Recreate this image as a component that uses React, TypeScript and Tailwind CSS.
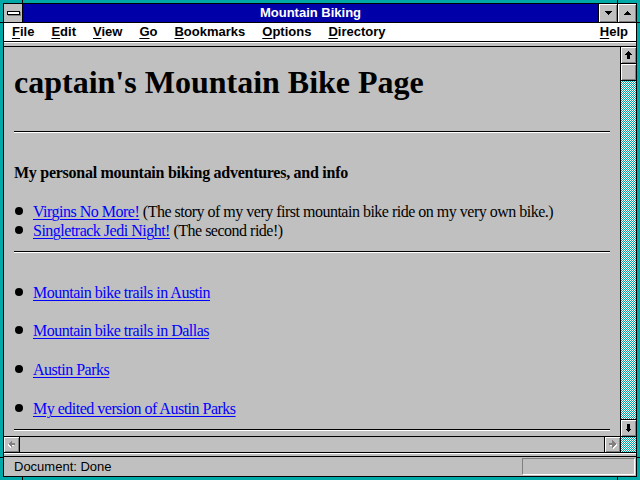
import React from "react";

const bevel = "shadow-[inset_1px_1px_0_#ffffff,inset_-1px_-1px_0_#808080]";
const checker =
  "bg-[repeating-conic-gradient(#00a8a8_0%_25%,#ffffff_0%_50%)] bg-[length:2px_2px]";

function ArrowV({ down = false, color = "#000" }: { down?: boolean; color?: string }) {
  return (
    <svg width="7" height="8" viewBox="0 0 7 8" shapeRendering="crispEdges" style={{ transform: down ? "rotate(180deg)" : undefined }}>
      <polygon points="3.5,0 7,3.5 5,3.5 5,8 2,8 2,3.5 0,3.5" fill={color} />
    </svg>
  );
}

function ArrowH({ left = false }: { left?: boolean }) {
  return (
    <svg width="9" height="9" viewBox="0 0 9 9" shapeRendering="crispEdges" style={{ transform: left ? "scaleX(-1)" : undefined }}>
      <polygon points="1,3 4,3 4,0 8,4 4,8 4,5 1,5" fill="#ffffff" transform="translate(1,1)" />
      <polygon points="1,3 4,3 4,0 8,4 4,8 4,5 1,5" fill="#808080" />
    </svg>
  );
}

function Tri({ down = false }: { down?: boolean }) {
  return (
    <svg width="7" height="4" viewBox="0 0 7 4" shapeRendering="crispEdges">
      {down ? <polygon points="0,0 7,0 3.5,4" fill="#000" /> : <polygon points="3.5,0 7,4 0,4" fill="#000" />}
    </svg>
  );
}

function Hr() {
  return <div className="h-0 border-t border-b border-t-black border-b-white" />;
}

function Bullet({ children }: { children: React.ReactNode }) {
  return (
    <div className="flex h-[19px] leading-[19px] text-[16px] tracking-[-0.5px] whitespace-nowrap">
      <div className="w-[19px] shrink-0 pl-px pt-[5px]">
        <div className="w-2 h-2 rounded-full bg-black" />
      </div>
      <div>{children}</div>
    </div>
  );
}

function A({ children }: { children: React.ReactNode }) {
  return <span className="text-[#0000ff] underline underline-offset-2 decoration-1">{children}</span>;
}

function Menu({ k, rest }: { k: string; rest: string }) {
  return (
    <span>
      <span className="underline underline-offset-2 decoration-1">{k}</span>
      {rest}
    </span>
  );
}

export default function App() {
  return (
    <div className="relative w-[640px] h-[480px] bg-[#00a8a8] p-[3px] overflow-hidden">
      {/* corner ticks */}
      <div className="absolute left-[22px] top-0 w-px h-[3px] bg-black" />
      <div className="absolute left-[617px] top-0 w-px h-[3px] bg-black" />
      <div className="absolute left-[22px] bottom-0 w-px h-[3px] bg-black" />
      <div className="absolute left-[617px] bottom-0 w-px h-[3px] bg-black" />
      <div className="absolute left-0 top-[22px] w-[3px] h-px bg-black" />
      <div className="absolute right-0 top-[22px] w-[3px] h-px bg-black" />
      <div className="absolute left-0 top-[457px] w-[3px] h-px bg-black" />
      <div className="absolute right-0 top-[457px] w-[3px] h-px bg-black" />

      <div className="w-full h-full border border-black bg-[#c0c0c0] flex flex-col font-['Liberation_Sans',Arial,sans-serif]">
        {/* title bar */}
        <div className="flex h-[18px] shrink-0">
          <div className="w-[18px] bg-[#c0c0c0] flex items-center justify-center">
            <div className="w-[13px] h-[4px] border border-black bg-white shadow-[1px_1px_0_#808080]" />
          </div>
          <div className="w-px bg-black" />
          <div className="flex-1 bg-[#0000a8] text-white font-bold text-[13px] leading-[18px] text-center">
            Mountain Biking
          </div>
          <div className="w-px bg-black" />
          <div className={`w-[18px] bg-[#c0c0c0] flex items-center justify-center ${bevel}`}>
            <Tri down />
          </div>
          <div className="w-px bg-black" />
          <div className={`w-[18px] bg-[#c0c0c0] flex items-center justify-center ${bevel}`}>
            <Tri />
          </div>
        </div>
        <div className="h-px bg-black shrink-0" />

        {/* menu bar */}
        <div className="flex h-[18px] shrink-0 bg-white text-black font-bold text-[13px] leading-[18px] pl-[8px] pr-[8px] gap-[17px]">
          <Menu k="F" rest="ile" />
          <Menu k="E" rest="dit" />
          <Menu k="V" rest="iew" />
          <Menu k="G" rest="o" />
          <Menu k="B" rest="ookmarks" />
          <Menu k="O" rest="ptions" />
          <Menu k="D" rest="irectory" />
          <span className="ml-auto">
            <Menu k="H" rest="elp" />
          </span>
        </div>
        <div className="h-px bg-black shrink-0" />
        <div className="h-[4px] shrink-0 border-t border-white bg-[#c0c0c0]" />
        <div className="h-px bg-black shrink-0" />

        {/* content + vscroll */}
        <div className="flex h-[389px] shrink-0">
          <div className="flex-1 overflow-hidden px-[10px] font-['Liberation_Serif','Times_New_Roman',serif] text-black">
            <h1 className="mt-[19px] text-[32px] leading-[32px] font-bold whitespace-nowrap">
              captain's Mountain Bike Page
            </h1>
            <div className="mt-[33px]">
              <Hr />
            </div>
            <div className="mt-[30px] text-[16px] leading-[19px] font-bold tracking-[-0.27px] whitespace-nowrap">
              My personal mountain biking adventures, and info
            </div>
            <div className="mt-[20px]">
              <Bullet>
                <A>Virgins No More!</A> (The story of my very first mountain bike ride on my very own bike.)
              </Bullet>
              <Bullet>
                <A>Singletrack Jedi Night!</A> (The second ride!)
              </Bullet>
            </div>
            <div className="mt-[11px]">
              <Hr />
            </div>
            <div className="mt-[30px]">
              <Bullet>
                <A>Mountain bike trails in Austin</A>
              </Bullet>
            </div>
            <div className="mt-[19px]">
              <Bullet>
                <A>Mountain bike trails in Dallas</A>
              </Bullet>
            </div>
            <div className="mt-[20px]">
              <Bullet>
                <A>Austin Parks</A>
              </Bullet>
            </div>
            <div className="mt-[20px]">
              <Bullet>
                <A>My edited version of Austin Parks</A>
              </Bullet>
            </div>
            <div className="mt-[11px]">
              <Hr />
            </div>
          </div>
          {/* vertical scrollbar */}
          <div className="w-[16px] border-l border-black flex flex-col">
            <div className={`h-[16px] shrink-0 bg-[#c0c0c0] flex items-center justify-center ${bevel}`}>
              <ArrowV />
            </div>
            <div className="h-px bg-black shrink-0" />
            <div className={`h-[16px] shrink-0 bg-[#c0c0c0] ${bevel}`} />
            <div className="h-px bg-black shrink-0" />
            <div className={`flex-1 ${checker}`} />
            <div className="h-px bg-black shrink-0" />
            <div className={`h-[16px] shrink-0 bg-[#c0c0c0] flex items-center justify-center ${bevel}`}>
              <ArrowV down />
            </div>
          </div>
        </div>
        <div className="h-px bg-black shrink-0" />

        {/* horizontal scrollbar */}
        <div className="flex h-[15px] shrink-0">
          <div className={`w-[15px] bg-[#c0c0c0] flex items-center justify-center ${bevel}`}>
            <ArrowH left />
          </div>
          <div className="w-px bg-black" />
          <div className="flex-1 bg-[#c0c0c0]" />
          <div className="w-px bg-black" />
          <div className={`w-[15px] bg-[#c0c0c0] flex items-center justify-center ${bevel}`}>
            <ArrowH />
          </div>
          <div className="w-px bg-black" />
          <div className={`w-[15px] ${checker}`} />
        </div>
        <div className="h-px bg-black shrink-0" />
        <div className="h-[3px] shrink-0 border-t border-white bg-[#c0c0c0]" />
        <div className="h-px bg-black shrink-0" />

        {/* status bar */}
        <div className="flex items-center flex-1 pl-[10px] pr-px text-[13px] text-black">
          <span>Document: Done</span>
          <div className="ml-auto w-[113px] h-[17px] border-t border-l border-t-[#808080] border-l-[#808080] border-b border-r border-b-white border-r-white" />
        </div>
      </div>
    </div>
  );
}
